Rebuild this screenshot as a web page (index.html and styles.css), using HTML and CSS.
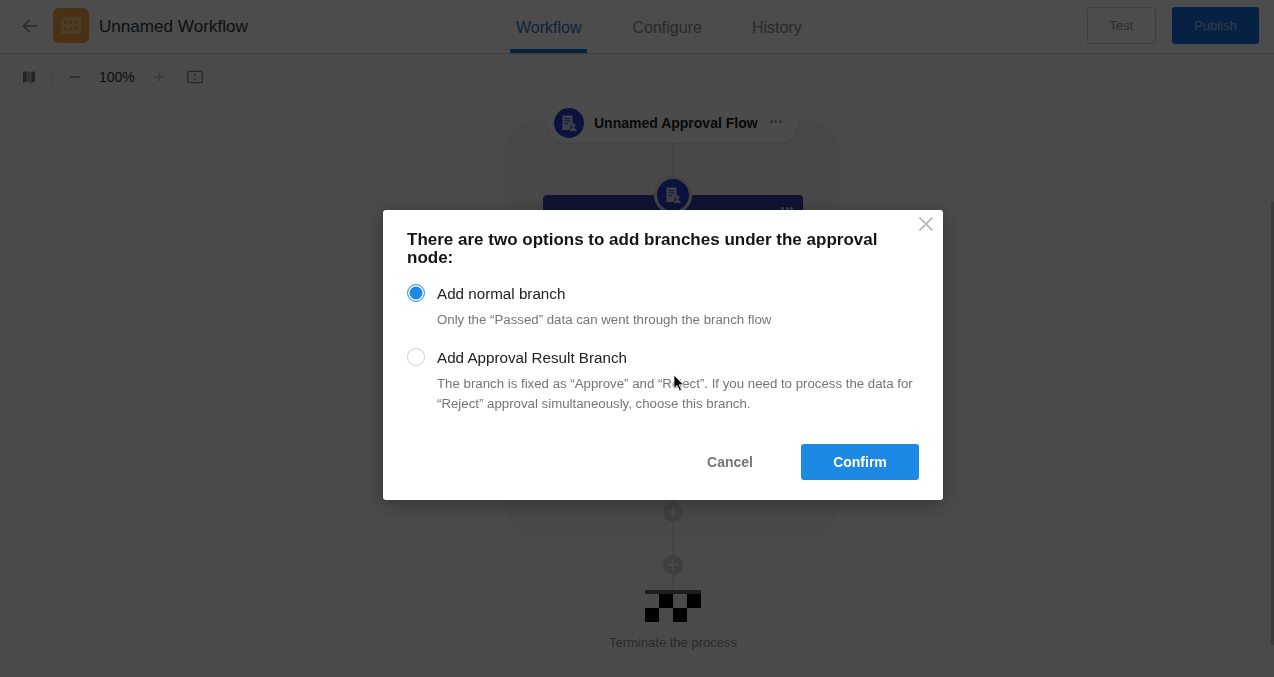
FILE: index.html
```html
<!DOCTYPE html>
<html lang="en">
<head>
<meta charset="utf-8">
<title>Unnamed Workflow</title>
<link rel="stylesheet" href="styles.css">
</head>
<body>
<div class="page">
  <header class="header">
    <div class="header-left">
      <svg class="back" width="16" height="14" viewBox="0 0 16 14"><path d="M7.500 1 1.500 7l6 6M1.500 7H15" fill="none" stroke="#888" stroke-width="1.500"/></svg>
      <div class="app-icon">
        <svg width="22" height="19" viewBox="0 0 22 19"><rect width="20" height="17" x="1" y="1" rx="2.500" fill="#fff" fill-opacity=".35"/><g fill="#f7a645"><rect x="4" y="4.500" width="3.200" height="3.400"/><rect x="9.400" y="4.500" width="3.200" height="3.400"/><rect x="14.800" y="4.500" width="3.200" height="3.400"/><rect x="4" y="11" width="3.200" height="3.400"/><rect x="9.400" y="11" width="3.200" height="3.400"/><rect x="14.800" y="11" width="3.200" height="3.400"/></g></svg>
      </div>
      <div class="wf-title">Unnamed Workflow</div>
    </div>
    <nav class="tabs">
      <a class="tab active">Workflow</a>
      <a class="tab">Configure</a>
      <a class="tab">History</a>
    </nav>
    <div class="actions">
      <button class="btn-test">Test</button>
      <button class="btn-publish">Publish</button>
    </div>
  </header>

  <main class="canvas">
    <div class="toolbar">
      <svg class="tool-map" width="14" height="14" viewBox="0 0 14 14"><path d="M1 2.500 4.700 1v10.500L1 13z" fill="#777"/><path d="M9.300 2.500 13 1v10.500L9.300 13z" fill="#777"/><path d="M5.200 1 8.800 2.500V13L5.200 11.500z" fill="#aaa"/></svg>
      <span class="tool-sep"></span>
      <svg class="tool-minus" width="10" height="12" viewBox="0 0 10 12"><path d="M0 6h10" stroke="#888" stroke-width="1.600"/></svg>
      <span class="zoom-val">100%</span>
      <svg class="tool-plus" width="10" height="10" viewBox="0 0 10 10"><path d="M.5 5h9M5 .5v9" stroke="#c4c4c4" stroke-width="1.500"/></svg>
      <svg class="tool-fit" width="16" height="14" viewBox="0 0 16 14"><rect x=".8" y="1.300" width="14.400" height="11.400" rx="1.200" fill="none" stroke="#888" stroke-width="1.300"/><path d="m8 3.600 1.600 2H6.400zM8 10.400 6.400 8.400h3.200z" fill="#888"/></svg>
    </div>

    <div class="group"></div>
    <div class="line line-a"></div>
    <div class="line line-b"></div>

    <div class="flow-pill">
      <span class="node-circle">
        <svg width="18" height="18" viewBox="0 0 18 18"><use href="#approval"/></svg>
      </span>
      <span class="flow-name">Unnamed Approval Flow</span>
      <span class="dots"><i></i><i></i><i></i></span>
    </div>

    <div class="card">
      <span class="dots dots-card"><i></i><i></i><i></i></span>
    </div>
    <span class="node-circle node-ring">
      <svg width="18" height="18" viewBox="0 0 18 18"><use href="#approval"/></svg>
    </span>

    <span class="add add-a"></span>
    <span class="add add-b"></span>

    <div class="finish">
      <div class="flag">
        <i></i><b></b><i></i><b></b>
        <b></b><i></i><b></b><i></i>
      </div>
      <div class="finish-text">Terminate the process</div>
    </div>
  </main>
</div>

<svg class="defs" width="0" height="0">
  <symbol id="approval" viewBox="0 0 18 18">
    <path d="M2.500 1.500h10v7.500a3.800 3.800 0 0 0-2.200 3.500c0 .6.100 1.100.4 1.500-.9.500-1.400 1.300-1.600 2H2.500z" fill="#fff" fill-opacity=".8"/>
    <path d="M4.500 4.500h6M4.500 7h6M4.500 9.500h3.500" stroke="#2741c8" stroke-width="1.200"/>
    <circle cx="13.300" cy="11.500" r="2.200" fill="#fff" fill-opacity=".8"/>
    <path d="M9.700 17c0-1.900 1.500-3 3.600-3s3.600 1.100 3.600 3z" fill="#fff" fill-opacity=".8"/>
  </symbol>
</svg>

<div class="overlay">
  <section class="dialog">
    <svg class="close" width="16" height="16" viewBox="0 0 16 16"><path d="m1.500 1.500 13 13m0-13-13 13" stroke="#bdbdbd" stroke-width="1.900"/></svg>
    <h2 class="dialog-title">There are two options to add branches under the approval node:</h2>
    <div class="option">
      <span class="radio checked"></span>
      <div class="option-body">
        <div class="option-label">Add normal branch</div>
        <div class="option-desc">Only the “Passed” data can went through the branch flow</div>
      </div>
    </div>
    <div class="option">
      <span class="radio"></span>
      <div class="option-body">
        <div class="option-label">Add Approval Result Branch</div>
        <div class="option-desc">The branch is fixed as “Approve” and “Reject”. If you need to process the data for “Reject” approval simultaneously, choose this branch.</div>
      </div>
    </div>
    <div class="dialog-actions">
      <button class="btn-cancel">Cancel</button>
      <button class="btn-confirm">Confirm</button>
    </div>
  </section>
  <div class="scroll-thumb"></div>
  <svg class="cursor" width="12" height="18" viewBox="0 0 12 18"><path d="M1 1v13.500l3.200-3 2.300 5.200 2-.9-2.300-5h4.300z" fill="#000" stroke="#fff" stroke-width=".8"/></svg>
</div>
</body>
</html>
```
FILE: styles.css
```css
* { box-sizing: border-box; }
html, body { margin: 0; height: 100%; overflow: hidden; }
body { font-family: "Liberation Sans", Arial, sans-serif; background: #f8f8f8; color: #333; }
.page { display: flex; flex-direction: column; height: 677px; }
.defs { position: absolute; }

.header { height: 54px; flex: none; background: #fdfdfd; border-bottom: 1px solid #d0d0d0; position: relative; display: flex; align-items: center; justify-content: space-between; padding: 0 15px 2px 22px; }
.header-left { display: flex; align-items: center; }
.back { margin-right: 15px; }
.app-icon { width: 36px; height: 35px; border-radius: 6px; background: #f7a645; display: flex; align-items: center; justify-content: center; }
.wf-title { margin: 2px 0 0 10px; font-size: 17.1px; color: #333; }
.tabs { position: absolute; left: 510px; top: 0; height: 53px; display: flex; gap: 40px; }
.tab { font-size: 16px; color: #8c8c8c; padding: 19px 5px 0 6px; height: 53px; line-height: 18px; }
.tab:last-child { margin-left: -1px; }
.tab.active { color: #2a7ad0; border-bottom: 4px solid #1e78d8; }
.actions { display: flex; gap: 16px; }
.btn-test, .btn-publish { height: 37px; font-family: inherit; font-size: 13px; border-radius: 3px; padding: 0; }
.btn-test { width: 69px; background: transparent; border: 1px solid #d8d8d8; color: #9a9a9a; }
.btn-publish { width: 87px; background: #1670e0; border: 0; color: #a6c8f0; }

.canvas { position: relative; flex: 1; }
.toolbar { display: flex; align-items: center; height: 46px; padding-left: 22px; }
.tool-sep { width: 1px; height: 16px; background: #e2e2e2; margin: 0 17px 0 16px; }
.tool-map { flex: none; }
.tool-plus { margin-left: 19px; }
.tool-fit { margin-left: 23px; }
.zoom-val { font-size: 14px; color: #333; margin-left: 19px; }

.group { position: absolute; left: 506px; top: 68px; width: 332px; height: 416px; border-radius: 30px; background: #f0f0f2; }
.line { position: absolute; left: 672px; width: 2px; background: #e0e0e0; }
.line-a { top: 88px; height: 60px; }
.line-b { top: 440px; height: 97px; }

.flow-pill { position: absolute; left: 547px; top: 48px; width: 251px; height: 41px; border-radius: 21px; background: #fafafa; box-shadow: 0 1px 3px rgba(0,0,0,.06); display: flex; align-items: center; padding-left: 7px; }
.node-circle { width: 30px; height: 30px; border-radius: 50%; background: #2741c8; display: flex; align-items: center; justify-content: center; flex: none; }
.flow-name { margin-left: 10px; font-size: 14px; font-weight: 700; color: #222; white-space: nowrap; }
.dots { display: inline-flex; gap: 1.5px; margin: -3px 0 0 12px; }
.dots i { width: 3px; height: 3px; border-radius: 50%; background: #999; display: block; }

.card { position: absolute; left: 543px; top: 141px; width: 260px; height: 120px; border-radius: 4px; background: #2f40a8; }
.dots-card { position: absolute; right: 10px; top: 12px; margin: 0; }
.dots-card i { background: #eee; }
.node-ring { position: absolute; left: 654px; top: 122px; width: 38px; height: 38px; border: 3px solid #e0e0e0; }

.add { position: absolute; left: 663px; width: 20px; height: 20px; border-radius: 50%; background: #d4d4d4; }
.add::before, .add::after { content: ""; position: absolute; background: #f5f5f5; }
.add::before { left: 5px; top: 9px; width: 10px; height: 2px; }
.add::after { left: 9px; top: 5px; width: 2px; height: 10px; }
.add-a { top: 448px; }
.add-b { top: 501px; }

.finish { position: absolute; left: 573px; top: 536px; width: 200px; display: flex; flex-direction: column; align-items: center; }
.flag { width: 56px; display: grid; grid-template-columns: repeat(4, 14px); grid-auto-rows: 14px; border-top: 4px solid #666; }
.flag b { background: #000; }
.finish-text { margin-top: 13px; font-size: 13px; color: #8c8c8c; }

.overlay { position: fixed; inset: 0; background: rgba(0,0,0,.7); }
.dialog { position: absolute; left: 383px; top: 210px; width: 560px; height: 290px; background: #fff; border-radius: 3px; padding: 21px 24px 20px; box-shadow: 0 4px 20px rgba(0,0,0,.3); display: flex; flex-direction: column; }
.close { position: absolute; right: 9px; top: 6px; }
.dialog-title { margin: 0; font-size: 17px; line-height: 18px; font-weight: 700; color: #151515; }
.option { display: flex; margin-top: 18px; }
.option + .option { margin-top: 19px; }
.radio { width: 18px; height: 18px; border-radius: 50%; border: 1px solid #d0d0d0; flex: none; margin-top: -1px; background: #fff; }
.radio.checked { border: 1px solid #4a9fee; box-shadow: inset 0 0 0 1.5px #fff; background: #1e88e5; }
.option-body { margin-left: 12px; }
.option-label { font-size: 15.2px; line-height: 18px; color: #222; }
.option-desc { margin-top: 7px; font-size: 13.25px; line-height: 20px; color: #757575; }
.dialog-actions { margin-top: auto; display: flex; justify-content: flex-end; align-items: center; }
.btn-cancel { background: none; border: 0; padding: 0; font: 700 14px "Liberation Sans", Arial, sans-serif; color: #757575; margin-right: 48px; }
.btn-confirm { width: 118px; height: 36px; background: #1e88e5; border: 0; border-radius: 3px; font: 700 14px "Liberation Sans", Arial, sans-serif; color: #fff; }
.scroll-thumb { position: absolute; right: 0; top: 202px; width: 3px; height: 443px; background: #3b3b3b; }
.cursor { position: absolute; left: 673px; top: 374px; }
```
